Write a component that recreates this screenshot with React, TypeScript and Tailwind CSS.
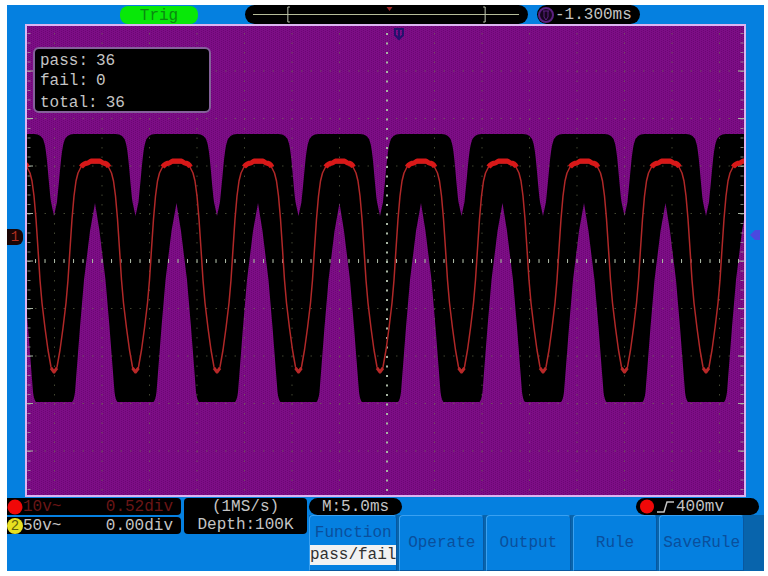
import type { ReactNode } from 'react'

const WIDTH = 717
const HEIGHT = 469
const PERIOD = 81.5
const FIRST_TROUGH = 27
const DIV = 47.5
const CENTER_X = 360
const CENTER_Y = 235

const troughs = Array.from({ length: 11 }, (_, i) => FIRST_TROUGH + (i - 1) * PERIOD)
const columns = Array.from({ length: 15 }, (_, i) => CENTER_X + (i - 7) * DIV)
const rows = Array.from({ length: 9 }, (_, i) => CENTER_Y + (i - 4) * DIV)

// one period of the mask, trough to trough
function maskPath(x: number): string {
  const end = x + PERIOD
  const top = `M${x} 190 L${x + 3} 176 C${x + 6} 150 ${x + 7} 125 ${x + 10} 116 Q${x + 12} 108 ${x + 20} 108 H${end - 20} Q${end - 12} 108 ${end - 10} 116 C${end - 7} 125 ${end - 6} 150 ${end - 3} 176 L${end} 190`
  const bottom = `V376 H${end - 18} Q${end - 20} 374 ${end - 21} 366 L${end - 26} 301 L${end - 30} 254 L${end - 36} 205 L${x + 41} 177 L${x + 36} 205 L${x + 30} 254 L${x + 26} 301 L${x + 21} 366 Q${x + 20} 374 ${x + 18} 376 H${x} Z`
  return `${top} ${bottom}`
}

// rising half of the trace as [dx, y]; the falling half mirrors it
const rise = [
  [0, 347], [3, 341], [6, 324], [9, 302], [12, 277], [14, 254],
  [16, 223], [18, 193], [20, 170], [22, 155], [24, 147], [27, 141], [33, 137],
]

function tracePath(x: number): string {
  const up = rise.map(([dx, y]) => `${x + dx} ${y}`)
  const down = [...rise].reverse().map(([dx, y]) => `${x + PERIOD - dx} ${y}`)
  return `M${[...up, ...down].join('L')}`
}

function crestPath(x: number): string {
  return `M${x + 27} 141 Q${x + 30} 137 ${x + 34} 137 L${x + 37} 135 H${x + 46} L${x + 49} 137 Q${x + 53} 137 ${x + 55} 141`
}

function Waveform() {
  return (
    <svg viewBox={`0 0 ${WIDTH} ${HEIGHT}`} className="block w-full h-auto" role="img" aria-label="Waveform">
      <defs>
        <pattern id="weave" width="4" height="4" patternUnits="userSpaceOnUse">
          <rect width="4" height="4" fill="#7d0e86" />
          <path d="M0 0h1v1h-1zM2 1h1v1h-1zM0 2h1v1h-1zM2 3h1v1h-1z" fill="#6c0674" />
        </pattern>
      </defs>
      <rect width={WIDTH} height={HEIGHT} fill="url(#weave)" />
      <path d={troughs.map(maskPath).join('')} fill="#000" />

      <g stroke="#6d7550" strokeWidth="1" strokeDasharray="1.5 8" opacity="0.6">
        {columns.map(x => <path key={x} d={`M${x} 7V${HEIGHT}`} />)}
        {rows.map(y => <path key={y} d={`M8 ${y}H${WIDTH}`} />)}
      </g>
      <g stroke="#a8b5a4" fill="none">
        <path d={`M${CENTER_X} 7V${HEIGHT}`} strokeWidth="2" strokeDasharray="2 7.5" />
        <path d={`M8 ${CENTER_Y}H${WIDTH}`} strokeWidth="4" strokeDasharray="1 8.5" />
        <path d={`M2 7V${HEIGHT}M${WIDTH - 2} 7V${HEIGHT}`} strokeWidth="3" strokeDasharray="1 8.5" opacity="0.7" />
        <path d={rows.map(y => `M0 ${y}h6M${WIDTH - 6} ${y}h6`).join('')} />
      </g>

      <g fill="none" strokeLinejoin="round">
        {troughs.map(x => <path key={`t${x}`} d={tracePath(x)} stroke="#b02828" strokeWidth="1.5" />)}
        {troughs.map(x => <path key={`c${x}`} d={crestPath(x)} stroke="#d81818" strokeWidth="5" />)}
        {troughs.map(x => <path key={`b${x}`} d={`M${x - 3} 342L${x} 346L${x + 3} 342`} stroke="#b82828" strokeWidth="3" />)}
      </g>

      <path d="M367 3h10M368 3v6l4 4l4-4v-6M372 4v7" fill="none" stroke="#25106e" strokeWidth="2" />
    </svg>
  )
}

function Readout({ className, children }: { className: string; children: ReactNode }) {
  return (
    <div className={`flex items-center bg-black h-[17px] leading-4 whitespace-pre ${className}`}>
      {children}
    </div>
  )
}

function TimeBar() {
  return (
    <div className="flex-1 h-[19px] ml-[47px] rounded-full bg-black">
      <svg viewBox="0 0 284 19" preserveAspectRatio="none" className="block w-full h-full" aria-hidden="true">
        <path d="M8 9.5H275" stroke="#b6bd9a" />
        <path d="M45 2h-2v15h2M239 2h2v15h-2" fill="none" stroke="#c2c8b4" />
        <path d="M142 2h6l-3 4z" fill="#a02828" />
      </svg>
    </div>
  )
}

function Softkey({ label, value }: { label: string; value?: string }) {
  return (
    <button
      type="button"
      className="flex-1 h-14 flex flex-col items-center justify-center rounded-t-sm border-t border-l border-t-[#3aa0f0] border-l-[#3aa0f0] border-r border-r-[#0858a0] border-b border-b-[#0858a0] bg-[#0580e0] text-[#0a4f9c]"
    >
      <span className="leading-6">{label}</span>
      {value && <span className="w-full h-5 leading-5 bg-[#f2f2f2] text-[#303030]">{value}</span>}
    </button>
  )
}

const softkeys = [
  { label: 'Function', value: 'pass/fail' },
  { label: 'Operate' },
  { label: 'Output' },
  { label: 'Rule' },
  { label: 'SaveRule' },
]

const results = [
  { name: 'pass', count: 36 },
  { name: 'fail', count: 0 },
  { name: 'total', count: 36 },
]

export default function App() {
  return (
    <div className="min-h-screen bg-white pl-[7px] pr-1 py-[5px] font-['Liberation_Mono',monospace] text-[16px]">
      <main className="bg-[#0580e0]">
        <header className="flex items-center pl-[113px] pr-[124px]">
          <div className="w-[78px] h-[18px] rounded-lg bg-[#08e808] text-center leading-5 text-[#0a8a10]">Trig</div>
          <TimeBar />
          <div className="ml-[9px] w-[103px] h-[19px] flex items-center rounded-full bg-black text-[#c4c4c4] leading-5">
            <svg viewBox="0 0 18 18" className="w-[18px] h-[18px] shrink-0" aria-hidden="true">
              <circle cx="9" cy="9" r="7" fill="#16051f" stroke="#5b2080" strokeWidth="2" />
              <path d="M6 5h6M7 5v6l2 3l2-3v-6" fill="none" stroke="#5b2080" />
            </svg>
            -1.300ms
          </div>
        </header>

        <section className="flex">
          <div className="w-[18px] shrink-0 pt-[205px]">
            <div className="w-4 h-4 rounded-r-md bg-[#1a0505] text-center text-sm leading-4 text-[#b03020]">1</div>
          </div>
          <div className="relative flex-1 border-2 border-[#dcb4f0]">
            <Waveform />
            <dl className="absolute left-1.5 top-[21px] w-[178px] h-[66px] pl-[5px] pt-0.5 rounded-md border-2 border-[#84609a] bg-black text-[#c4c4c4] leading-5">
              {results.map(r => (
                <div key={r.name} className="flex gap-2 last:pt-0.5">
                  <dt>{r.name}:</dt>
                  <dd>{r.count}</dd>
                </div>
              ))}
            </dl>
          </div>
          <div className="w-[18px] shrink-0 pt-[206px] pl-1">
            <svg viewBox="0 0 12 10" className="w-3 h-2.5" aria-hidden="true">
              <path d="M0 5L5 0h5v10h-5z" fill="#4a48e0" />
            </svg>
          </div>
        </section>

        <footer className="flex">
          <div className="w-[174px] mt-px flex flex-col gap-0.5">
            <Readout className="rounded-r-sm pr-2 text-[#6a1616]">
              <svg viewBox="0 0 16 16" className="w-4 h-4 shrink-0" aria-hidden="true">
                <circle cx="8" cy="8" r="7.5" fill="#f00808" />
              </svg>
              <span className="flex-1">10v~</span>
              <span>0.52div</span>
            </Readout>
            <Readout className="rounded-r-sm pr-2 text-[#c4c4c4]">
              <span className="w-4 h-4 shrink-0 rounded-full bg-[#e8e020] text-center text-sm leading-4 text-[#60600c]">2</span>
              <span className="flex-1">50v~</span>
              <span>0.00div</span>
            </Readout>
          </div>
          <div className="ml-[3px] mt-px w-[123px] h-9 rounded-sm bg-black text-center leading-[18px] text-[#c4c4c4]">
            <p>(1MS/s)</p>
            <p>Depth:100K</p>
          </div>
          <div className="flex-1 ml-0.5 mt-px">
            <div className="flex justify-between pr-[5px]">
              <Readout className="w-[93px] justify-center rounded-full text-[#c4c4c4]">M:5.0ms</Readout>
              <Readout className="w-[123px] rounded-full text-[#c4c4c4]">
                <svg viewBox="0 0 40 17" className="w-10 h-[17px] shrink-0" aria-hidden="true">
                  <circle cx="11" cy="8.5" r="7" fill="#f00808" />
                  <path d="M21 14h7l3-10h7" fill="none" stroke="#c4c4c4" strokeWidth="1.5" />
                </svg>
                400mv
              </Readout>
            </div>
            <div className="flex gap-0.5 pr-5 bg-[#0864ac]">
              {softkeys.map(k => <Softkey key={k.label} {...k} />)}
            </div>
          </div>
        </footer>
      </main>
    </div>
  )
}
